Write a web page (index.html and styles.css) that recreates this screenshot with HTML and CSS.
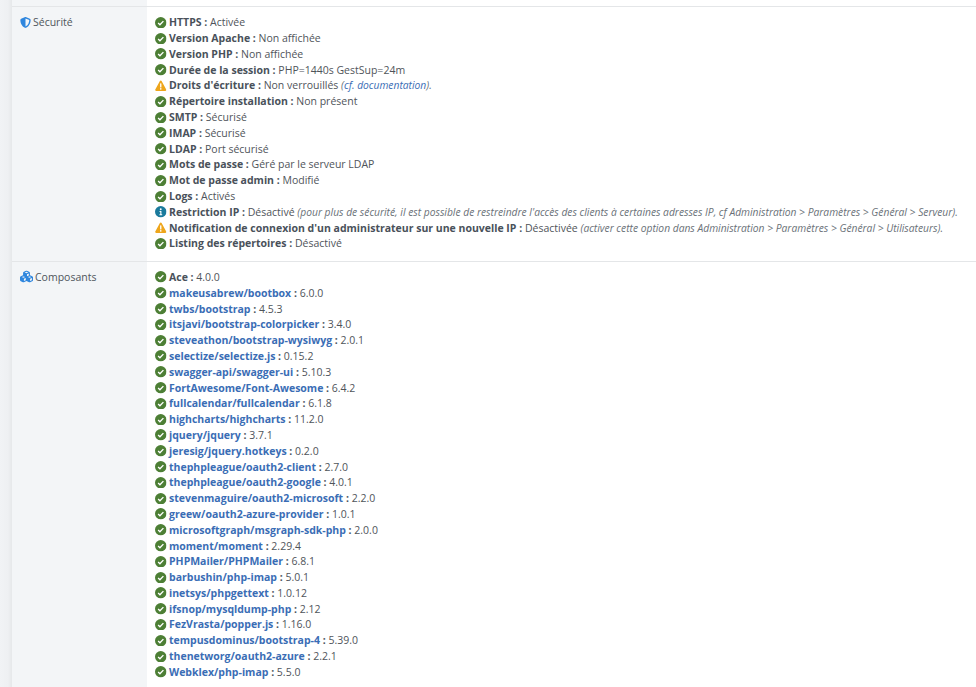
FILE: index.html
```html
<!DOCTYPE html>
<html lang="fr">
<head>
<meta charset="utf-8">
<title>Sécurité et composants</title>
<link rel="stylesheet" href="styles.css">
</head>
<body>
<svg class="defs" width="0" height="0" aria-hidden="true">
  <symbol id="ok" viewBox="0 0 24 24"><circle cx="12" cy="12" r="12" fill="#4d7f35"/><path d="M6.600 12.600l3.700 3.600 7.200-7.600" fill="none" stroke="#fff" stroke-width="3"/></symbol>
  <symbol id="warn" viewBox="0 0 24 24"><path d="M12 1.200c.8 0 1.400.4 1.800 1.100l9.600 17.400c.8 1.400-.2 3-1.800 3H2.400c-1.600 0-2.600-1.600-1.800-3l9.600-17.400c.4-.7 1-1.100 1.800-1.100z" fill="#eea61c"/><rect x="10.600" y="7" width="2.800" height="8.600" rx="1.200" fill="#fff"/><circle cx="12" cy="18.600" r="1.700" fill="#fff"/></symbol>
  <symbol id="info" viewBox="0 0 24 24"><circle cx="12" cy="12" r="12" fill="#1a7a9c"/><circle cx="12" cy="6.800" r="2" fill="#fff"/><path d="M9.500 10.400h3.900v7h1.600v2H9.300v-2h1.700v-5H9.500z" fill="#fff"/></symbol>
</svg>
<main class="page">
  <section class="row">
    <h2 class="label">
      <svg class="label-icon" viewBox="0 0 512 512"><path fill="#2e86de" d="M256 0c4.600 0 9.200 1 13.400 2.900L457.700 82.800c22 9.300 38.400 31 38.300 57.200-.5 99.200-41.300 280.700-213.600 363.200-16.700 8-36.100 8-52.800 0C57.300 420.700 16.500 239.200 16 140c-.1-26.200 16.300-47.900 38.300-57.200L242.700 2.900C246.800 1 251.400 0 256 0zm0 66.800V444.800C394 378 431.100 230.100 432 141.400L256 66.800z"/></svg>
      <span>Sécurité</span>
    </h2>
    <ul class="list">
      <li><svg class="st"><use href="#ok"/></svg><b>HTTPS :</b> Activée</li>
      <li><svg class="st"><use href="#ok"/></svg><b>Version Apache :</b> Non affichée</li>
      <li><svg class="st"><use href="#ok"/></svg><b>Version PHP :</b> Non affichée</li>
      <li><svg class="st"><use href="#ok"/></svg><b>Durée de la session :</b> PHP=1440s GestSup=24m</li>
      <li><svg class="st"><use href="#warn"/></svg><b>Droits d'écriture :</b> Non verrouillés <i class="note">(<a class="doc">cf. documentation</a>).</i></li>
      <li><svg class="st"><use href="#ok"/></svg><b>Répertoire installation :</b> Non présent</li>
      <li><svg class="st"><use href="#ok"/></svg><b>SMTP :</b> Sécurisé</li>
      <li><svg class="st"><use href="#ok"/></svg><b>IMAP :</b> Sécurisé</li>
      <li><svg class="st"><use href="#ok"/></svg><b>LDAP :</b> Port sécurisé</li>
      <li><svg class="st"><use href="#ok"/></svg><b>Mots de passe :</b> Géré par le serveur LDAP</li>
      <li><svg class="st"><use href="#ok"/></svg><b>Mot de passe admin :</b> Modifié</li>
      <li><svg class="st"><use href="#ok"/></svg><b>Logs :</b> Activés</li>
      <li><svg class="st"><use href="#info"/></svg><b>Restriction IP :</b> Désactivé <i class="note">(pour plus de sécurité, il est possible de restreindre l'accès des clients à certaines adresses IP, cf Administration &gt; Paramètres &gt; Général &gt; Serveur).</i></li>
      <li><svg class="st"><use href="#warn"/></svg><b>Notification de connexion d'un administrateur sur une nouvelle IP :</b> Désactivée <i class="note">(activer cette option dans Administration &gt; Paramètres &gt; Général &gt; Utilisateurs).</i></li>
      <li><svg class="st"><use href="#ok"/></svg><b>Listing des répertoires :</b> Désactivé</li>
    </ul>
  </section>
  <section class="row">
    <h2 class="label">
      <svg class="label-icon wide" viewBox="0 0 576 512"><path fill="#2e86de" d="M290.800 48.600l78.400 29.700L288 109.500 206.800 78.300l78.400-29.700c1.800-.7 3.800-.7 5.700 0zM136 92.500V204.700c-1.300 .4-2.600 .8-3.900 1.300l-96 36.400C14.400 250.600 0 271.500 0 294.700V413.900c0 22.200 13.100 42.300 33.500 51.300l96 42.200c14.400 6.300 30.700 6.300 45.100 0L288 457.500l113.500 49.900c14.400 6.300 30.700 6.300 45.100 0l96-42.200c20.300-8.900 33.500-29.100 33.500-51.300V294.700c0-23.300-14.400-44.100-36.100-52.400l-96-36.400c-1.300-.5-2.600-.9-3.900-1.300V92.500c0-23.300-14.400-44.100-36.100-52.400l-96-36.400c-12.800-4.800-26.900-4.800-39.700 0l-96 36.400C150.400 48.400 136 69.300 136 92.500zM392 210.600l-82.400 31.200V152.600L392 121v89.600zM154.800 250.900l78.400 29.700L152 311.700 70.800 280.600l78.400-29.700c1.800-.7 3.800-.7 5.700 0zm18.800 204.400V354.800L256 323.200v95.900l-82.400 36.200zM421.200 250.900c1.800-.7 3.800-.7 5.700 0l78.400 29.700L424 311.700l-81.200-31.100 78.400-29.700zM523.200 421.200l-77.600 34.100V354.800L528 323.200v90.700c0 3.200-1.900 6-4.800 7.300z"/></svg>
      <span>Composants</span>
    </h2>
    <ul class="list">
      <li><svg class="st"><use href="#ok"/></svg><b>Ace :</b> 4.0.0</li>
      <li><svg class="st"><use href="#ok"/></svg><b><a class="pkg">makeusabrew/bootbox</a> :</b> 6.0.0</li>
      <li><svg class="st"><use href="#ok"/></svg><b><a class="pkg">twbs/bootstrap</a> :</b> 4.5.3</li>
      <li><svg class="st"><use href="#ok"/></svg><b><a class="pkg">itsjavi/bootstrap-colorpicker</a> :</b> 3.4.0</li>
      <li><svg class="st"><use href="#ok"/></svg><b><a class="pkg">steveathon/bootstrap-wysiwyg</a> :</b> 2.0.1</li>
      <li><svg class="st"><use href="#ok"/></svg><b><a class="pkg">selectize/selectize.js</a> :</b> 0.15.2</li>
      <li><svg class="st"><use href="#ok"/></svg><b><a class="pkg">swagger-api/swagger-ui</a> :</b> 5.10.3</li>
      <li><svg class="st"><use href="#ok"/></svg><b><a class="pkg">FortAwesome/Font-Awesome</a> :</b> 6.4.2</li>
      <li><svg class="st"><use href="#ok"/></svg><b><a class="pkg">fullcalendar/fullcalendar</a> :</b> 6.1.8</li>
      <li><svg class="st"><use href="#ok"/></svg><b><a class="pkg">highcharts/highcharts</a> :</b> 11.2.0</li>
      <li><svg class="st"><use href="#ok"/></svg><b><a class="pkg">jquery/jquery</a> :</b> 3.7.1</li>
      <li><svg class="st"><use href="#ok"/></svg><b><a class="pkg">jeresig/jquery.hotkeys</a> :</b> 0.2.0</li>
      <li><svg class="st"><use href="#ok"/></svg><b><a class="pkg">thephpleague/oauth2-client</a> :</b> 2.7.0</li>
      <li><svg class="st"><use href="#ok"/></svg><b><a class="pkg">thephpleague/oauth2-google</a> :</b> 4.0.1</li>
      <li><svg class="st"><use href="#ok"/></svg><b><a class="pkg">stevenmaguire/oauth2-microsoft</a> :</b> 2.2.0</li>
      <li><svg class="st"><use href="#ok"/></svg><b><a class="pkg">greew/oauth2-azure-provider</a> :</b> 1.0.1</li>
      <li><svg class="st"><use href="#ok"/></svg><b><a class="pkg">microsoftgraph/msgraph-sdk-php</a> :</b> 2.0.0</li>
      <li><svg class="st"><use href="#ok"/></svg><b><a class="pkg">moment/moment</a> :</b> 2.29.4</li>
      <li><svg class="st"><use href="#ok"/></svg><b><a class="pkg">PHPMailer/PHPMailer</a> :</b> 6.8.1</li>
      <li><svg class="st"><use href="#ok"/></svg><b><a class="pkg">barbushin/php-imap</a> :</b> 5.0.1</li>
      <li><svg class="st"><use href="#ok"/></svg><b><a class="pkg">inetsys/phpgettext</a> :</b> 1.0.12</li>
      <li><svg class="st"><use href="#ok"/></svg><b><a class="pkg">ifsnop/mysqldump-php</a> :</b> 2.12</li>
      <li><svg class="st"><use href="#ok"/></svg><b><a class="pkg">FezVrasta/popper.js</a> :</b> 1.16.0</li>
      <li><svg class="st"><use href="#ok"/></svg><b><a class="pkg">tempusdominus/bootstrap-4</a> :</b> 5.39.0</li>
      <li><svg class="st"><use href="#ok"/></svg><b><a class="pkg">thenetworg/oauth2-azure</a> :</b> 2.2.1</li>
      <li><svg class="st"><use href="#ok"/></svg><b><a class="pkg">Webklex/php-imap</a> :</b> 5.5.0</li>
    </ul>
  </section>
</main>
</body>
</html>
```
FILE: styles.css
```css
* { box-sizing: border-box; }
html, body { margin: 0; padding: 0; height: 100%; overflow: hidden; }
body {
  background: linear-gradient(to right, #f1f3f5 0, #eef0f2 8px, #e6e8ea 12px);
  font-family: "Open Sans", "Noto Sans", sans-serif;
  font-size: 10.5px;
  color: #4f545a;
}
.defs { position: absolute; }
.page {
  margin-left: 12px;
  padding-top: 6px;
  height: 687px;
  background: linear-gradient(to right, #f3f5f7 135px, #fff 135px);
}
.row {
  display: grid;
  grid-template-columns: 135px 1fr;
  border-bottom: 1px solid #e4e6e8;
}
.row:first-child { border-top: 1px solid #e4e6e8; }
.row:last-child { border-bottom: 0; }
.label {
  margin: 0;
  padding: 7px 0 0 8px;
  display: flex;
  align-items: flex-start;
  gap: 2px;
  font-size: 10.5px;
  font-weight: 400;
  line-height: 16px;
  color: #4f565c;
}
.label-icon { width: 11px; height: 13px; margin-top: 1.5px; }
.label-icon.wide { width: 13px; margin-top: 1.5px; }
.list {
  list-style: none;
  margin: 0;
  padding: 8.25px 0 8.5px 8px;
}
.list li {
  height: 15.8px;
  line-height: 15.8px;
  white-space: pre-wrap;
}
.st { width: 11.5px; height: 11.5px; margin-right: 2.5px; vertical-align: -2px; }
b { font-weight: 700; color: #49515a; }
.pkg { color: #3a6db5; }
.note { font-size: 10.28px; color: #6a7178; }
.doc { color: #3a6db5; }
```
